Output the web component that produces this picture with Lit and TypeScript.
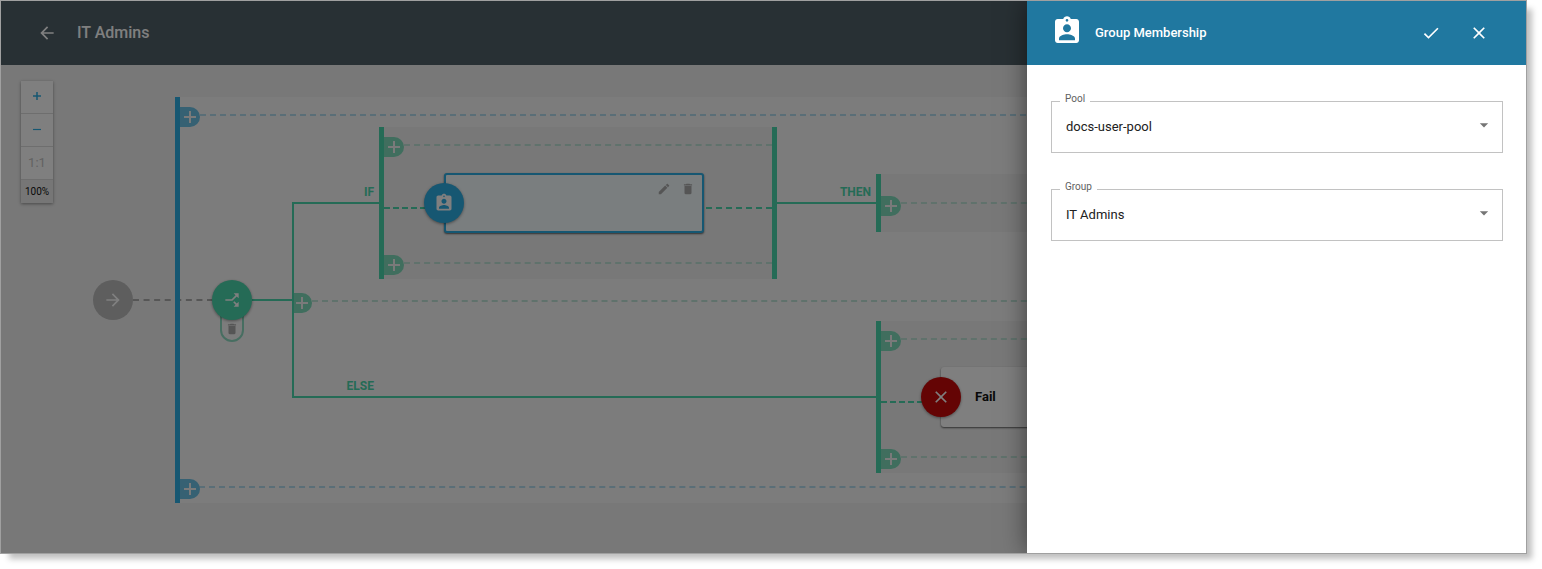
import { LitElement, html, css, svg } from "lit";
import { customElement, state } from "lit/decorators.js";
import { styleMap } from "lit/directives/style-map.js";

type Tone = "blue" | "green" | "soft-blue" | "soft-green" | "grey";

/** A rectangle on the canvas; without a width it runs to the right edge. */
interface Box {
  x: number;
  y: number;
  w?: number;
  h?: number;
}
interface Toned extends Box {
  tone: Tone;
}

const PATHS = {
  back: "M20 11H7.83l5.59-5.59L12 4l-8 8 8 8 1.41-1.41L7.83 13H20v-2z",
  forward: "M12 4l-1.41 1.41L16.17 11H4v2h12.17l-5.58 5.59L12 20l8-8z",
  badge:
    "M19 3h-4.18C14.4 1.84 13.3 1 12 1s-2.4.84-2.82 2H5c-1.1 0-2 .9-2 2v14c0 1.1.9 2 2 2h14c1.1 0 2-.9 2-2V5c0-1.1-.9-2-2-2zm-7 0c.55 0 1 .45 1 1s-.45 1-1 1-1-.45-1-1 .45-1 1-1zm0 4c1.66 0 3 1.34 3 3s-1.34 3-3 3-3-1.34-3-3 1.34-3 3-3zm6 12H6v-1.4c0-2 4-3.1 6-3.1s6 1.1 6 3.1V19z",
  check: "M9 16.17L4.83 12l-1.42 1.41L9 19 21 7l-1.41-1.41z",
  close:
    "M19 6.41L17.59 5 12 10.59 6.41 5 5 6.41 10.59 12 5 17.59 6.41 19 12 13.41 17.59 19 19 17.59 13.41 12z",
  edit: "M3 17.25V21h3.75L17.81 9.94l-3.75-3.75L3 17.25zM20.71 7.04c.39-.39.39-1.02 0-1.41l-2.34-2.34c-.39-.39-1.02-.39-1.41 0l-1.83 1.83 3.75 3.75 1.83-1.83z",
  trash: "M6 19c0 1.1.9 2 2 2h8c1.1 0 2-.9 2-2V7H6v12zM19 4h-3.5l-1-1h-5l-1 1H5v2h14V4z",
  branch:
    "M14 4l2.29 2.29-2.88 2.88 1.42 1.42 2.88-2.88L20 10V4zm-4 0H4v6l2.29-2.29 4.71 4.7V20h2v-8.41l-5.29-5.3z",
  caret: "M7 10l5 5 5-5z",
};

const icon = (name: keyof typeof PATHS, size: number) => html`<svg
  class=${name}
  viewBox="0 0 24 24"
  width=${size}
  height=${size}
  fill="currentColor"
  aria-hidden="true"
>
  ${svg`<path d=${PATHS[name]}></path>`}
</svg>`;

const place = (b: Box) =>
  styleMap({
    left: `${b.x}px`,
    top: `${b.y}px`,
    width: b.w === undefined ? undefined : `${b.w}px`,
    height: b.h === undefined ? undefined : `${b.h}px`,
    right: b.w === undefined ? "0" : undefined,
  });

const PANELS: (Box & { kind: string })[] = [
  { kind: "outer", x: 179, y: 32, h: 406 },
  { kind: "inner", x: 383, y: 62, w: 388, h: 152 },
  { kind: "inner", x: 880, y: 109, h: 58 },
  { kind: "inner", x: 880, y: 256, h: 152 },
];

const DASHES: Toned[] = [
  { tone: "soft-blue", x: 199, y: 49 },
  { tone: "soft-blue", x: 198, y: 421 },
  { tone: "soft-green", x: 403, y: 79, w: 368 },
  { tone: "soft-green", x: 403, y: 197, w: 368 },
  { tone: "soft-green", x: 311, y: 235 },
  { tone: "soft-green", x: 900, y: 137 },
  { tone: "soft-green", x: 900, y: 273 },
  { tone: "soft-green", x: 900, y: 391 },
  { tone: "green", x: 383, y: 142, w: 42 },
  { tone: "green", x: 705, y: 142, w: 66 },
  { tone: "green", x: 880, y: 336, w: 42 },
  { tone: "grey", x: 132, y: 234, w: 80 },
];

const SOLIDS: Toned[] = [
  { tone: "blue", x: 174, y: 32, w: 5, h: 406 },
  { tone: "green", x: 378, y: 62, w: 5, h: 152 },
  { tone: "green", x: 771, y: 62, w: 5, h: 152 },
  { tone: "green", x: 875, y: 109, w: 5, h: 58 },
  { tone: "green", x: 875, y: 256, w: 5, h: 152 },
  { tone: "green", x: 251, y: 234, w: 40, h: 2 },
  { tone: "green", x: 291, y: 137, w: 2, h: 196 },
  { tone: "green", x: 291, y: 137, w: 87, h: 2 },
  { tone: "green", x: 291, y: 331, w: 584, h: 2 },
  { tone: "green", x: 776, y: 137, w: 99, h: 2 },
];

const ADDERS: Toned[] = [
  { tone: "blue", x: 179, y: 42 },
  { tone: "blue", x: 179, y: 414 },
  { tone: "green", x: 383, y: 72 },
  { tone: "green", x: 383, y: 190 },
  { tone: "green", x: 291, y: 228 },
  { tone: "green", x: 880, y: 131 },
  { tone: "green", x: 880, y: 266 },
  { tone: "green", x: 880, y: 384 },
];

const LABELS = [
  { text: "IF", x: 323, y: 119 },
  { text: "THEN", x: 820, y: 119 },
  { text: "ELSE", x: 323, y: 313 },
];

@customElement("flow-canvas")
export class FlowCanvas extends LitElement {
  static styles = css`
    :host {
      display: block;
      position: relative;
      overflow: hidden;
      background: #f0f0f0;
      color: #111;
    }
    button {
      font: inherit;
      color: inherit;
      border: 0;
      padding: 0;
      margin: 0;
      background: none;
      display: grid;
      place-items: center;
    }
    svg {
      display: block;
    }
    .branch {
      transform: rotate(90deg);
    }
    .zoom {
      position: absolute;
      left: 20px;
      top: 16px;
      width: 32px;
      display: grid;
      gap: 1px;
      background: #dcdcdc;
      box-shadow: 0 1px 3px rgba(0, 0, 0, 0.4);
      font-size: 13px;
    }
    .zoom button {
      height: 32px;
      padding-bottom: 2px;
      background: #fff;
      color: #2caee4;
    }
    .zoom .reset {
      color: #c4c4c4;
    }
    .zoom output {
      height: 23px;
      line-height: 23px;
      background: #ececec;
      text-align: center;
      font-size: 10px;
    }
    .panel,
    .dash,
    .solid,
    .adder,
    .label,
    .node,
    .card,
    .pill {
      position: absolute;
    }
    .panel.outer {
      background: #f9f9f9;
    }
    .panel.inner {
      background: #f0f0f0;
    }
    .dash {
      border-top: 2px dashed;
    }
    .dash.soft-blue {
      color: #b4dcee;
    }
    .dash.soft-green {
      color: #c0e4d8;
    }
    .dash.green {
      color: #4ad6ac;
    }
    .dash.grey {
      color: #acacac;
    }
    .solid.blue {
      background: #2caee4;
    }
    .solid.green {
      background: #4ad6ac;
    }
    .adder {
      width: 20px;
      height: 20px;
      border-radius: 0 10px 10px 0;
      color: #f4f4f4;
    }
    .adder.blue {
      background: #6cc2e6;
    }
    .adder.green {
      background: #80dcbc;
    }
    .label {
      width: 50px;
      text-align: right;
      font-size: 12px;
      line-height: 17px;
      font-weight: 700;
      color: #4ad6ac;
    }
    .node {
      width: 40px;
      height: 40px;
      border-radius: 50%;
      color: #fff;
      box-shadow: 0 1px 3px rgba(0, 0, 0, 0.4);
    }
    .node.start {
      background: #bcbcbc;
      box-shadow: none;
    }
    .node.rule {
      background: #4ad6ac;
    }
    .node.member {
      background: #2caee4;
    }
    .node.fail {
      background: #c80808;
    }
    .pill {
      width: 24px;
      height: 34px;
      box-sizing: border-box;
      border: 2px solid #8fdcc3;
      border-radius: 0 0 12px 12px;
      color: #aaa;
      align-items: end;
      padding-bottom: 4px;
    }
    .card {
      width: 260px;
      height: 60px;
      box-sizing: border-box;
      border-radius: 3px;
      background: #fff;
      box-shadow: 0 1px 2px rgba(0, 0, 0, 0.6);
      display: flex;
      align-items: center;
      padding: 0 0 2px 34px;
      font-size: 13px;
      font-weight: 700;
    }
    .card.selected {
      border: 2px solid #2caee4;
      background: #f4fcfe;
      align-items: start;
      justify-content: end;
      gap: 10px;
      padding: 7px 7px 0 0;
      color: #aaa;
    }
  `;

  @state() private zoom = 100;

  render() {
    return html`
      ${PANELS.map((p) => html`<div class="panel ${p.kind}" style=${place(p)}></div>`)}
      ${DASHES.map((d) => html`<div class="dash ${d.tone}" style=${place(d)}></div>`)}
      ${ADDERS.map(
        (a) => html`<button class="adder ${a.tone}" style=${place({ ...a, w: 20 })} aria-label="Add step">
          <svg width="12" height="12" viewBox="0 0 12 12" fill="currentColor" aria-hidden="true">
            <path d="M5 0h2v5h5v2H7v5H5V7H0V5h5z"></path>
          </svg>
        </button>`,
      )}
      ${SOLIDS.map((s) => html`<div class="solid ${s.tone}" style=${place(s)}></div>`)}
      ${LABELS.map((l) => html`<div class="label" style=${place({ x: l.x, y: l.y, w: 50 })}>${l.text}</div>`)}

      <div class="card selected" style=${place({ x: 443, y: 108, w: 260 })}>
        <button aria-label="Edit">${icon("edit", 14)}</button>
        <button aria-label="Delete">${icon("trash", 14)}</button>
      </div>
      <div class="card" style=${place({ x: 940, y: 302, w: 260 })}>Fail</div>

      <button class="pill" style=${place({ x: 219, y: 243, w: 24 })} aria-label="Delete rule">
        ${icon("trash", 14)}
      </button>
      ${this.node("start", 92, 215, "forward")} ${this.node("rule", 211, 215, "branch")}
      ${this.node("member", 423, 118, "badge")} ${this.node("fail", 920, 312, "close")}

      <div class="zoom">
        <button aria-label="Zoom in" @click=${() => (this.zoom += 10)}>
          <svg width="8" height="8" viewBox="0 0 8 8" stroke="currentColor" aria-hidden="true">
            <path d="M0 4h8M4 0v8" stroke-width="1.5"></path>
          </svg>
        </button>
        <button aria-label="Zoom out" @click=${() => (this.zoom -= 10)}>
          <svg width="8" height="8" viewBox="0 0 8 8" stroke="currentColor" aria-hidden="true">
            <path d="M0 4.5h8" stroke-width="1.2"></path>
          </svg>
        </button>
        <button class="reset" @click=${() => (this.zoom = 100)}>1:1</button>
        <output>${this.zoom}%</output>
      </div>
    `;
  }

  private node(kind: string, x: number, y: number, glyph: keyof typeof PATHS) {
    return html`<button class="node ${kind}" style=${place({ x, y, w: 40 })} aria-label=${kind}>
      ${icon(glyph, 20)}
    </button>`;
  }
}

@customElement("outlined-select")
export class OutlinedSelect extends LitElement {
  static properties = {
    label: { type: String },
    value: { type: String },
  };
  declare label: string;
  declare value: string;

  static styles = css`
    :host {
      display: grid;
      position: relative;
    }
    label {
      position: absolute;
      left: 9px;
      top: -10px;
      padding: 0 5px;
      background: #fff;
      color: #616161;
      font-size: 10px;
      line-height: 16px;
    }
    select {
      appearance: none;
      height: 52px;
      padding: 0 40px 2px 14px;
      border: 1px solid #c2c2c2;
      border-radius: 0;
      background: #fff;
      color: #212121;
      font: inherit;
      font-size: 13px;
    }
    svg {
      position: absolute;
      right: 9px;
      top: 14px;
      color: #757575;
      pointer-events: none;
    }
  `;

  render() {
    return html`
      <select id="field">
        <option selected>${this.value}</option>
      </select>
      <label for="field">${this.label}</label>
      ${icon("caret", 20)}
    `;
  }
}

@customElement("app-root")
export class AppRoot extends LitElement {
  static styles = css`
    :host {
      display: flex;
      box-sizing: border-box;
      min-height: 100vh;
      padding: 0 15px 15px 0;
      background: #fff;
      font-family: Roboto, "Liberation Sans", sans-serif;
    }
    .window {
      flex: 1;
      min-width: 0;
      position: relative;
      display: flex;
      flex-direction: column;
      border: 1px solid #a0a0a0;
      box-shadow: 7px 7px 6px -2px rgba(0, 0, 0, 0.25);
    }
    .bar {
      height: 64px;
      display: flex;
      align-items: center;
      gap: 20px;
      padding-left: 36px;
      background: #506069;
      color: #fff;
    }
    h1 {
      margin: 0;
      padding-bottom: 2px;
      font-size: 16px;
      font-weight: 500;
    }
    button {
      border: 0;
      padding: 0;
      background: none;
      color: inherit;
      display: grid;
      place-items: center;
    }
    svg {
      display: block;
    }
    flow-canvas {
      flex: 1;
    }
    .scrim {
      position: absolute;
      inset: 0;
      background: rgba(0, 0, 0, 0.5);
      overflow: hidden;
    }
    .drawer {
      position: absolute;
      top: 0;
      right: 0;
      bottom: 0;
      width: 499px;
      max-width: 100%;
      background: #fff;
      box-shadow: 0 0 24px rgba(0, 0, 0, 0.5);
    }
    .head {
      height: 64px;
      display: flex;
      align-items: center;
      gap: 12px;
      padding: 0 23px 0 24px;
      background: #2078a0;
      color: #fff;
    }
    .head svg {
      flex: none;
    }
    .mark {
      padding-bottom: 4px;
    }
    h2 {
      flex: 1;
      margin: 0;
      padding-bottom: 2px;
      font-size: 13px;
      font-weight: 500;
    }
    .actions {
      display: flex;
    }
    .actions button {
      width: 48px;
      height: 48px;
    }
    form {
      display: grid;
      gap: 36px;
      padding: 36px 23px 24px 24px;
    }
  `;

  render() {
    return html`
      <div class="window">
        <header class="bar">
          <button aria-label="Back">${icon("back", 20)}</button>
          <h1>IT Admins</h1>
        </header>
        <flow-canvas></flow-canvas>
        <div class="scrim">
          <aside class="drawer">
            <header class="head">
              <div class="mark">${icon("badge", 32)}</div>
              <h2>Group Membership</h2>
              <div class="actions">
                <button aria-label="Apply">${icon("check", 20)}</button>
                <button aria-label="Close">${icon("close", 20)}</button>
              </div>
            </header>
            <form>
              <outlined-select label="Pool" value="docs-user-pool"></outlined-select>
              <outlined-select label="Group" value="IT Admins"></outlined-select>
            </form>
          </aside>
        </div>
      </div>
    `;
  }
}
